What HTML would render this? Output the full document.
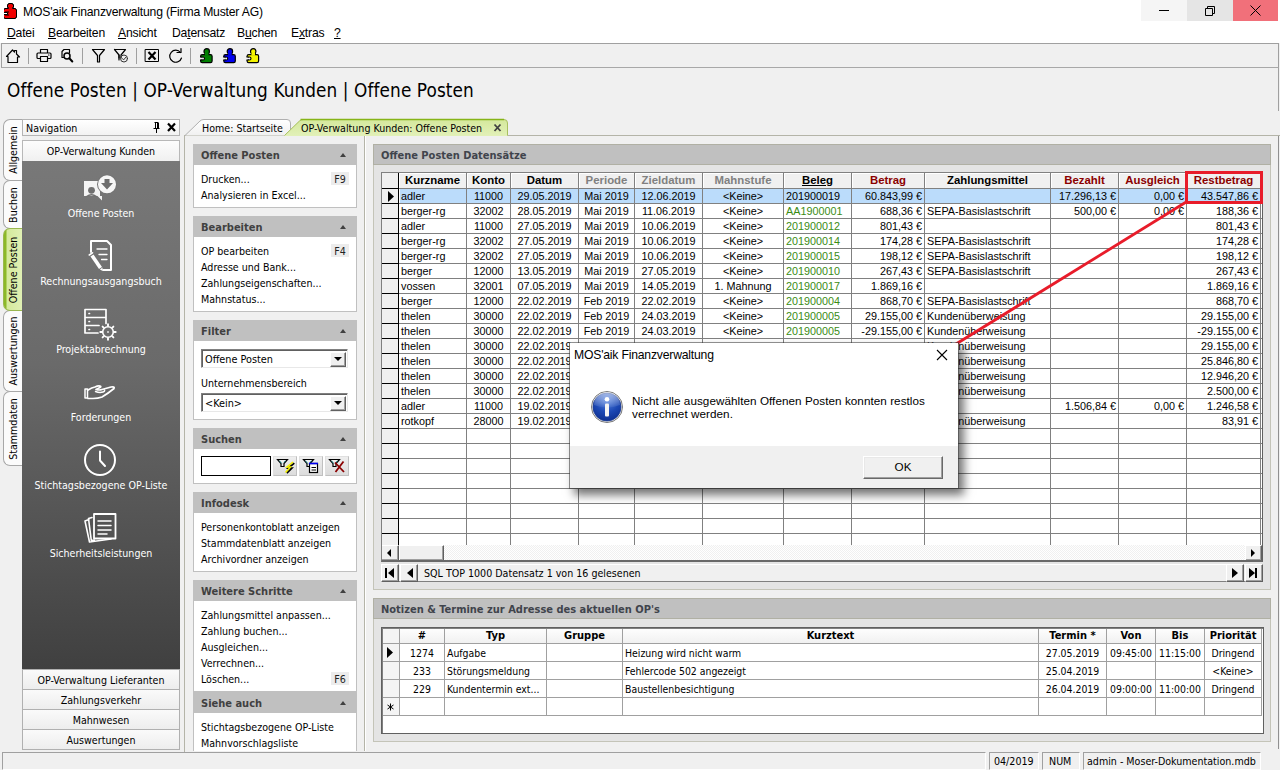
<!DOCTYPE html>
<html lang="de">
<head>
<meta charset="utf-8">
<title>MOS'aik Finanzverwaltung (Firma Muster AG)</title>
<style>
*{box-sizing:border-box;margin:0;padding:0}
html,body{width:1280px;height:770px;overflow:hidden;background:#f0f0f0}
body{position:relative;font-family:"Liberation Sans","DejaVu Sans",sans-serif;font-size:11px;color:#000}
.abs{position:absolute}
.ui{font-family:"DejaVu Sans Condensed","Liberation Sans",sans-serif}
/* title + menu */
#titlebar{left:0;top:0;width:1280px;height:22px;background:#fff}
#titletext{left:23px;top:3.500px;font-size:12.200px;line-height:16px;white-space:nowrap;letter-spacing:-.2px}
.wbtn{top:0;width:46px;height:21px}
#menubar{left:0;top:22px;width:1280px;height:21px;background:#fff}
.mi{top:25px;font-size:12.200px;line-height:16px;white-space:nowrap;letter-spacing:-.2px}
.mi u{text-decoration:underline;text-underline-offset:1px}
/* toolbar */
#toolbar{left:1px;top:43px;width:1278px;height:25px;background:#f0f0f0;border:1px solid #a0a0a0;border-bottom-color:#a8a8a8}
.tsep{top:48px;width:1px;height:16px;background:#a0a0a0}
#heading{left:7px;top:78.6px;font-size:18.8px;line-height:24px;white-space:nowrap;letter-spacing:.1px}

/* nav */
.vtab{left:3px;width:19px;background:#fbfbfb;border:1px solid #a8a8a8;border-right:none;border-radius:7px 0 0 7px}
.vtab span{position:absolute;left:50%;top:50%;transform:translate(-50%,-50%) rotate(-90deg);white-space:nowrap;font-size:10.6px;line-height:13px}
.vtab.act{background:linear-gradient(90deg,#8cb828 0,#8cb828 2px,#d4ea9c 3px,#e0f0b4 100%);border-color:#9ab850}
#navhead{left:22px;top:119px;width:158px;height:17px;background:linear-gradient(#fff,#f2f2f2);border:1px solid #b4b4b4}
#navbtn{left:22px;top:140px;width:158px;height:21px;background:linear-gradient(#fdfdfd,#f0f0f0);border:1px solid #b8b8b8;border-bottom:none;text-align:center;font-size:10.6px;line-height:20px}
#navdark{left:22px;top:161px;width:158px;height:508px;background:linear-gradient(#787878,#6a6a6a 40%,#404040)}
.nlab{left:22px;width:158px;text-align:center;color:#fff;font-size:10.6px;line-height:14px;white-space:nowrap}
.nbot{left:22px;width:158px;height:20px;background:linear-gradient(#fafafa,#ededed);border:1px solid #b0b0b0;border-bottom:none;text-align:center;font-size:10.6px;line-height:21px}

/* doc tabs + frame */
#frame{left:184px;top:135px;width:1096px;height:617px;border:1px solid #b4b4a8;border-right:none;border-bottom:none;background:#f0f0f0}
.dtxt{top:121px;font-size:10.6px;line-height:14px;white-space:nowrap}
/* task pane */
.tg{left:193px;width:164px;background:#fff;border:1px solid #c0c0c0}
.tgh{left:193px;width:164px;height:21px;background:#c0c0c0;color:#404040;font-weight:bold;font-size:11px;line-height:23px;padding-left:8px}
.tgh i{position:absolute;left:147px;top:9px;width:0;height:0;border-left:3px solid transparent;border-right:3px solid transparent;border-bottom:4px solid #404040}
.ti{left:201px;font-size:10.6px;line-height:14px;white-space:nowrap}
.fk{left:331px;width:18px;height:13px;background:#ececec;font-size:10.6px;line-height:14.5px;text-align:center;color:#222}
.combo{left:201px;width:147px;height:19px;background:#fff;border:1px solid #808080;border-right-color:#e8e8e8;border-bottom-color:#e8e8e8;box-shadow:inset 1px 1px 0 #606060;font-size:10.8px;line-height:19px;padding-left:3px}
.combo b{position:absolute;right:1px;top:2px;width:16px;height:15px;background:#f0f0f0;border:1px solid #fff;border-right-color:#606060;border-bottom-color:#606060;box-shadow:inset -1px -1px 0 #a0a0a0}
.combo b:after{content:"";position:absolute;left:3px;top:4px;border-left:4px solid transparent;border-right:4px solid transparent;border-top:4px solid #000}
.sbtn{top:456px;width:24px;height:20px;background:linear-gradient(#eee,#dcdcdc);border:1px solid #e0e0e0;border-right-color:#c0c0c0;border-bottom-color:#c0c0c0}

/* main panels */
.pnl{background:#e4e4e4;border:1px solid #c4c4b8}
.pnlh{height:21px;background:#c0c0c0;border:1px solid #b0b0a4;color:#40444c;font-weight:bold;font-size:11px;line-height:21px;padding-left:7px;white-space:nowrap}
.grid{background:#fff;overflow:hidden}
.gb{left:0;top:0;width:100%;height:100%;border:1px solid #808080;border-right-color:#606060;border-bottom-color:#606060}
.grid>*{position:absolute}
#g1{font-size:10.8px;line-height:15px}
#g1 .gh{top:1px;height:15px;font-weight:bold;font-size:11.4px;text-align:center;white-space:nowrap;box-shadow:inset 1px 1px 0 #fff}
.gh.g{color:#808080}.gh.r{color:#8b0000}.gh.u{text-decoration:underline}
.gr1{left:0;width:881px;height:15px}
.c{position:absolute;top:0;height:15px;white-space:nowrap;overflow:hidden}
.c.l{text-align:left;padding-left:2px}.c.r{text-align:right;padding-right:2px}.c.m{text-align:center}
.c.gr{color:#3a8c14}
.hl{left:0;width:881px;height:1px;background:#808080}
.vl{top:0;width:1px;height:373px}
.sb{background:#f0f0f0;border:1px solid #fff;border-right-color:#606060;border-bottom-color:#606060;box-shadow:inset -1px -1px 0 #a0a0a0}

#g2{font-size:10.4px;line-height:17px}
#g2 .gh{top:1px;height:15px;font-weight:bold;font-size:11px;line-height:15px;text-align:center;white-space:nowrap}
.gr2{left:0;width:881px;height:18px}
.gr2 .c{height:18px;line-height:18px}
.gr2 .c.l{padding-left:2px}
/* status */
.st{top:752px;height:18px;border:1px solid #a0a0a0;border-right-color:#fff;border-bottom-color:#fff;font-size:10.6px;line-height:16px;white-space:nowrap;padding-left:4px}

/* dialog */
#dlg{left:570px;top:343px;width:388px;height:145px;background:#fff;box-shadow:0 0 0 1px rgba(60,60,60,.55),5px 6px 9px 1px rgba(0,0,0,.55)}
#dlgfoot{left:0;top:103px;width:388px;height:42px;background:#f0f0f0}
#dlgt{left:4px;top:4px;font-size:12.200px;line-height:16px;white-space:nowrap;letter-spacing:-.2px}
#dlgm{left:62px;top:51px;font-size:11.7px;line-height:13px;white-space:nowrap;letter-spacing:.05px}
#ok{left:293px;top:113px;width:80px;height:23px;background:#f0f0f0;border:1px solid #fff;border-right-color:#696969;border-bottom-color:#696969;box-shadow:inset -1px -1px 0 #a0a0a0,inset 1px 1px 0 #e8e8e8;text-align:center;font-size:11.7px;line-height:20px}
</style>
</head>
<body>
<!-- ===== title bar ===== -->
<div id="titlebar" class="abs"></div>
<svg class="abs" style="left:4px;top:3px" width="13" height="16" viewBox="0 0 13 16"><path d="M4.5 0.5h4v1h1v3h-1v1h3v1h1v8h-1v1h-11v-1h-1v-3h4v-2h-4v-3h1v-1h4v-1h-1v-3h1z" fill="#f00000" stroke="#000" stroke-width="1"/><path d="M1 9h4M1 12h4" stroke="#000" stroke-width="1" fill="none"/></svg>
<div id="titletext" class="abs">MOS'aik Finanzverwaltung (Firma Muster AG)</div>
<div class="abs wbtn" style="left:1141px;background:#f5f5f5"></div>
<div class="abs wbtn" style="left:1187px;background:#e5e5e5"></div>
<div class="abs wbtn" style="left:1233px;width:45px;background:#f1707a"></div>
<svg class="abs" style="left:1141px;top:0" width="138" height="21" viewBox="0 0 138 21"><path d="M18 10.5h10" stroke="#000" stroke-width="1" fill="none"/><path d="M64.5 8.500h7v7h-7zM66.500 8.500v-2h7v7h-2" stroke="#000" stroke-width="1" fill="none"/><path d="M109.500 5.500l10 10M119.500 5.500l-10 10" stroke="#000" stroke-width="1" fill="none"/></svg>
<!-- ===== menu bar ===== -->
<div id="menubar" class="abs"></div>
<div class="abs mi" style="left:7px"><u>D</u>atei</div>
<div class="abs mi" style="left:48px"><u>B</u>earbeiten</div>
<div class="abs mi" style="left:118px"><u>A</u>nsicht</div>
<div class="abs mi" style="left:172px">Da<u>t</u>ensatz</div>
<div class="abs mi" style="left:237px">B<u>u</u>chen</div>
<div class="abs mi" style="left:291px">E<u>x</u>tras</div>
<div class="abs mi" style="left:334px"><u>?</u></div>
<!-- ===== toolbar ===== -->
<div id="toolbar" class="abs"></div>
<div class="abs tsep" style="left:28px"></div>
<div class="abs tsep" style="left:82px"></div>
<div class="abs tsep" style="left:136px"></div>
<div class="abs tsep" style="left:190px"></div>
<svg class="abs" style="left:0;top:43px" width="270" height="25" viewBox="0 43 270 25" fill="none" stroke="#000" stroke-width="1.2" stroke-linejoin="round" stroke-linecap="round">
<path d="M6.5 56.500l6-6.500l2 2v-1.500h2v3.500l3 3h-2v5.500h-9.500v-6z"/>
<path d="M40.500 53v-3.500h7v3.500M40.500 58.500h-2.500q-1 0-1-1v-3.500q0-1 1-1h12q1 0 1 1v3.500q0 1-1 1h-2.500M40.500 56.500h7v5h-7z"/><path d="M48.500 55h0.500"/>
<path d="M63.500 57.500h-1.500v-6l2-2h5.500v3"/><circle cx="67" cy="56" r="3" stroke-width="1.500"/><path d="M69.300 58.300l3 3.200" stroke-width="2"/>
<path d="M92.500 49.500h12l-5 6v6.500h-2v-6.500z"/>
<path d="M114.500 49.500h11l-4.500 5.500v3M119 58v-3z"/><path d="M114.500 49.500l4.500 5.500v5"/><circle cx="124" cy="58.500" r="3.500" stroke="#333" stroke-width="1"/><path d="M122.300 58.500l1.300 1.400l2.200-2.600" stroke="#333" stroke-width="1"/>
<rect x="145.500" y="49.500" width="13" height="12" stroke-width="1"/><path d="M148.500 52l7 7.500M155.500 52l-7 7.500" stroke-width="2.200" stroke-linecap="butt"/>
<path d="M180.500 52.500a6 6 0 1 0 1 5.500"/><path d="M177 52.500h4v-4"/>
</svg>
<svg class="abs" style="left:199px;top:48px" width="64" height="16" viewBox="0 0 64 16"><g transform="translate(0,0)"><rect x="1.6" y="6.600" width="11.500" height="8" rx="1.600" fill="#008000" stroke="#000" stroke-width="1.200"/><circle cx="7.700" cy="3.400" r="2.700" fill="#008000" stroke="#000" stroke-width="1.200"/><rect x="5.900" y="4.500" width="3.600" height="3.200" fill="#008000"/><rect x="0.500" y="9.200" width="3.500" height="2.600" fill="#f0f0f0"/><circle cx="4" cy="10.500" r="1.500" fill="#f4f4f4" stroke="#000" stroke-width="1.100"/><rect x="0.500" y="9.700" width="3" height="1.600" fill="#f0f0f0"/><path d="M1 9h2.500M1 12h2.500" stroke="#000" stroke-width="1.100" fill="none"/></g><g transform="translate(23.2,0)"><rect x="1.6" y="6.600" width="11.500" height="8" rx="1.600" fill="#0000f0" stroke="#000" stroke-width="1.200"/><circle cx="7.700" cy="3.400" r="2.700" fill="#0000f0" stroke="#000" stroke-width="1.200"/><rect x="5.900" y="4.500" width="3.600" height="3.200" fill="#0000f0"/><rect x="0.500" y="9.200" width="3.500" height="2.600" fill="#f0f0f0"/><circle cx="4" cy="10.500" r="1.500" fill="#f4f4f4" stroke="#000" stroke-width="1.100"/><rect x="0.500" y="9.700" width="3" height="1.600" fill="#f0f0f0"/><path d="M1 9h2.500M1 12h2.500" stroke="#000" stroke-width="1.100" fill="none"/></g><g transform="translate(46.5,0)"><rect x="1.6" y="6.600" width="11.500" height="8" rx="1.600" fill="#f4f400" stroke="#000" stroke-width="1.200"/><circle cx="7.700" cy="3.400" r="2.700" fill="#f4f400" stroke="#000" stroke-width="1.200"/><rect x="5.900" y="4.500" width="3.600" height="3.200" fill="#f4f400"/><rect x="0.500" y="9.200" width="3.500" height="2.600" fill="#f0f0f0"/><circle cx="4" cy="10.500" r="1.500" fill="#f4f4f4" stroke="#000" stroke-width="1.100"/><rect x="0.500" y="9.700" width="3" height="1.600" fill="#f0f0f0"/><path d="M1 9h2.500M1 12h2.500" stroke="#000" stroke-width="1.100" fill="none"/></g></svg>
<!--TOOLBARICONS-->
<div id="heading" class="abs ui">Offene Posten | OP-Verwaltung Kunden | Offene Posten</div>
<div class="abs" style="left:1278px;top:68px;width:1px;height:43px;background:#a0a0a0"></div>
<!-- ===== navigation pane ===== -->
<div class="abs vtab ui" style="top:119px;height:62px"><span>Allgemein</span></div>
<div class="abs vtab ui" style="top:180px;height:49px"><span>Buchen</span></div>
<div class="abs vtab ui" style="top:310px;height:82px"><span>Auswertungen</span></div>
<div class="abs vtab ui" style="top:391px;height:75px"><span>Stammdaten</span></div>
<div class="abs vtab act ui" style="top:228px;height:83px"><span>Offene Posten</span></div>
<div id="navhead" class="abs"></div>
<div class="abs ui" style="left:26px;top:122px;font-size:10.6px;line-height:13px">Navigation</div>
<svg class="abs" style="left:152px;top:122px" width="26" height="11" viewBox="0 0 26 11"><path d="M2.500 0.500h4M3.500 1v5M5.500 1v5M6.500 1v5M1.500 6.500h6M4.500 7v4" stroke="#000" stroke-width="1" fill="none"/><path d="M16 1.500l7 7.500M23 1.500l-7 7.500" stroke="#000" stroke-width="2.200" fill="none"/></svg>
<div id="navbtn" class="abs ui">OP-Verwaltung Kunden</div>
<div id="navdark" class="abs"></div>
<svg class="abs" style="left:70px;top:165px" width="60" height="385" viewBox="70 165 60 385" fill="none" stroke="#fff" stroke-width="2" stroke-linejoin="round" stroke-linecap="round">
<!-- offene posten -->
<path d="M84 181h16v15h2v4.500l-4.500-4.500h-13.500z" fill="#f4f4f4" stroke="none"/>
<circle cx="91.500" cy="190.300" r="3.400" fill="#707070" stroke="none"/><path d="M86.500 196.500q5-3.500 10 0" stroke="#707070" stroke-width="1.300"/>
<circle cx="107" cy="184.300" r="10" fill="#747474" stroke="none"/><circle cx="107" cy="184.300" r="9" fill="#f6f6f6" stroke="none"/>
<path d="M104.500 179h5v4h3.500l-6 6.500l-6-6.500h3.500z" fill="#6c6c6c" stroke="none"/>
<!-- rechnungsausgangsbuch -->
<path d="M91 252v-11h16l4 4v25h-8"/><path d="M97 249h10M99 254.500h8M101.500 259.500h5.500" stroke-width="1.300"/>
<path d="M90.500 256.500l3-2l8.500 12.500l-3 2z" fill="#fff" stroke="none"/><path d="M99.800 269.500l2.500 1.300l0.300-3.200z" fill="#fff" stroke="none"/><path d="M89.300 255l3.200-2.200" stroke-width="1.600"/>
<!-- projektabrechnung -->
<path d="M85 309.500h21v14M85 309.500v23.500h13M85 317.500h21M85 325.500h14" stroke-width="1.700"/><path d="M89 313.500h0.500M89 321.500h0.500M89 329.500h0.500" stroke-width="1.700"/>
<circle cx="108" cy="332" r="5.300" stroke-width="1.600"/><path d="M108 324.300v1.500M108 338.200v1.500M100.300 332h1.500M114.200 332h1.500M102.600 326.600l1 1M112.400 336.400l1 1M102.600 337.400l1-1M112.400 327.600l1-1" stroke-width="1.900"/><path d="M107.700 332h0.600" stroke-width="1.400"/>
<!-- forderungen -->
<path d="M85 389h2.500v9h-2.500z" stroke-width="1.500"/><path d="M88 390q4-2.500 7-3q3-1.500 5-1q2 0.500-1 2l-3 1.500q3 1 6 0l9-2.500q4-0.500 3 1.500q-6 5-12 8.500q-4 1.500-9 1.500h-5" stroke-width="1.700"/><path d="M95.500 391.500q4 1.500 7.500 0.500q2-0.600 1.500-2" stroke-width="1.500"/>
<!-- stichtag -->
<circle cx="100" cy="460" r="15" stroke-width="2"/><path d="M100 451.500v9l5 5.500" stroke-width="2"/>
<!-- sicherheitsleistungen -->
<path d="M94 514h21.500v24.500h-21.500z" stroke-width="1.800"/><path d="M98 521h13M98 525.500h13M98 530h13M98 534h9" stroke-width="1.500"/>
<path d="M92 517.500l-3.500 1l2.800 22l3-0.400M89 519.500l-4 1.500l4.500 21l21.500-3" stroke-width="1.600"/>
</svg>
<div class="abs nlab ui" style="top:206px">Offene Posten</div>
<div class="abs nlab ui" style="top:274px">Rechnungsausgangsbuch</div>
<div class="abs nlab ui" style="top:342px">Projektabrechnung</div>
<div class="abs nlab ui" style="top:410px">Forderungen</div>
<div class="abs nlab ui" style="top:478px">Stichtagsbezogene OP-Liste</div>
<div class="abs nlab ui" style="top:546px">Sicherheitsleistungen</div>
<div class="abs nbot ui" style="top:669px">OP-Verwaltung Lieferanten</div>
<div class="abs nbot ui" style="top:689px">Zahlungsverkehr</div>
<div class="abs nbot ui" style="top:709px">Mahnwesen</div>
<div class="abs nbot ui" style="top:729px;height:21px;border-bottom:1px solid #b0b0b0">Auswertungen</div>

<!-- ===== document tabs / frame ===== -->
<div id="frame" class="abs"></div>
<svg class="abs" style="left:184px;top:118px" width="330" height="19" viewBox="184 118 330 19">
<defs><linearGradient id="gt" x1="0" y1="0" x2="0" y2="1"><stop offset="0" stop-color="#fff"/><stop offset="1" stop-color="#f0f0f0"/></linearGradient>
<linearGradient id="gg" x1="0" y1="0" x2="0" y2="1"><stop offset="0" stop-color="#d4e89c"/><stop offset="1" stop-color="#e2f0b8"/></linearGradient></defs>
<path d="M185 135.500l15-14.500q1.500-1.500 4-1.500h83q3.500 0 3.500 3.500v12.500z" fill="url(#gt)"/><path d="M185 135.500l15-14.500q1.500-1.500 4-1.500h83q3.500 0 3.500 3.500v12.500" fill="none" stroke="#b0b0b0"/>
<path d="M284 136l15-15q1.500-1.500 4-1.500h201q3.500 0 3.500 3.500v13z" fill="url(#gg)"/><path d="M284.500 135.500l15-14.500q1.500-1.500 4-1.500h200.500q3.500 0 3.500 3.500v12.500" fill="none" stroke="#a8c060"/><path d="M300.500 119.500h203.500" stroke="#86b418" stroke-width="1.600" fill="none"/>
<path d="M494.500 124.500l6 6.500M500.500 124.500l-6 6.500" stroke="#404040" stroke-width="1.800" fill="none"/>
</svg>
<div class="abs dtxt ui" style="left:202px">Home: Startseite</div>
<div class="abs dtxt ui" style="left:301px">OP-Verwaltung Kunden: Offene Posten</div>
<div class="abs" style="left:364px;top:136px;width:1px;height:615px;background:#b4b4a8"></div>
<div class="abs" style="left:365px;top:136px;width:1px;height:615px;background:#fff"></div>

<!-- ===== task pane ===== -->
<div class="abs tg" style="top:144px;height:64px"></div><div class="abs tgh ui" style="top:144px">Offene Posten<i></i></div>
<div class="abs ti ui" style="top:172px">Drucken...</div><div class="abs fk ui" style="top:172px">F9</div>
<div class="abs ti ui" style="top:188px">Analysieren in Excel...</div>
<div class="abs tg" style="top:216px;height:96px"></div><div class="abs tgh ui" style="top:216px">Bearbeiten<i></i></div>
<div class="abs ti ui" style="top:244px">OP bearbeiten</div><div class="abs fk ui" style="top:244px">F4</div>
<div class="abs ti ui" style="top:260px">Adresse und Bank...</div>
<div class="abs ti ui" style="top:276px">Zahlungseigenschaften...</div>
<div class="abs ti ui" style="top:292px">Mahnstatus...</div>
<div class="abs tg" style="top:320px;height:100px"></div><div class="abs tgh ui" style="top:320px">Filter<i></i></div>
<div class="abs combo ui" style="top:349px">Offene Posten<b></b></div>
<div class="abs ti ui" style="top:376px">Unternehmensbereich</div>
<div class="abs combo ui" style="top:393px">&lt;Kein&gt;<b></b></div>
<div class="abs tg" style="top:428px;height:56px"></div><div class="abs tgh ui" style="top:428px">Suchen<i></i></div>
<div class="abs" style="left:201px;top:456px;width:70px;height:20px;background:#fff;border:1px solid #000"></div>
<div class="abs sbtn" style="left:273px"></div><div class="abs sbtn" style="left:299px"></div><div class="abs sbtn" style="left:325px"></div>
<svg class="abs" style="left:273px;top:456px" width="76" height="20" viewBox="273 456 76 20" fill="none">
<g id="fn"><path d="M277.500 459.500h10l-3.500 4v3h-3v-3z" fill="#f0f0f0" stroke="#000" stroke-width="1.200"/><path d="M279.500 460.800l2.300 2.700M285.300 460.800l-1.300 1.600" stroke="#20a0a0" stroke-width="0.900"/></g>
<path d="M293.500 462.500l-6 5h3.500l-5 5" stroke="#000" stroke-width="1.800" transform="translate(0.800,0.600)"/><path d="M293 462l-6 5h3.500l-5 5.500" stroke="#f4f000" stroke-width="1.600"/>
<use href="#fn" x="26"/>
<rect x="309.500" y="463.500" width="8" height="9" fill="#fff" stroke="#000" stroke-width="1.200"/><path d="M309 463.500h9" stroke="#0000f0" stroke-width="1.600"/><path d="M311.500 467.500h4.500M311.500 470h4.500" stroke="#000" stroke-width="1"/>
<use href="#fn" x="52"/>
<path d="M335 462.500l9 9.500M343.500 461.500l-8 10.500" stroke="#8b0000" stroke-width="1.800"/>
</svg>
<div class="abs tg" style="top:492px;height:80px"></div><div class="abs tgh ui" style="top:492px">Infodesk<i></i></div>
<div class="abs ti ui" style="top:520px">Personenkontoblatt anzeigen</div>
<div class="abs ti ui" style="top:536px">Stammdatenblatt anzeigen</div>
<div class="abs ti ui" style="top:552px">Archivordner anzeigen</div>
<div class="abs tg" style="top:580px;height:112px"></div><div class="abs tgh ui" style="top:580px">Weitere Schritte<i></i></div>
<div class="abs ti ui" style="top:608px">Zahlungsmittel anpassen...</div>
<div class="abs ti ui" style="top:624px">Zahlung buchen...</div>
<div class="abs ti ui" style="top:640px">Ausgleichen...</div>
<div class="abs ti ui" style="top:656px">Verrechnen...</div>
<div class="abs ti ui" style="top:672px">Löschen...</div><div class="abs fk ui" style="top:672px">F6</div>
<div class="abs tg" style="top:692px;height:59px;border-bottom:none"></div><div class="abs tgh ui" style="top:692px">Siehe auch<i></i></div>
<div class="abs ti ui" style="top:720px">Stichtagsbezogene OP-Liste</div>
<div class="abs ti ui" style="top:736px">Mahnvorschlagsliste</div>

<!-- ===== main: panel 1 ===== -->
<div class="abs pnl" style="left:373px;top:144px;width:898px;height:446px"></div>
<div class="abs pnlh ui" style="left:373px;top:144px;width:898px">Offene Posten Datensätze</div>
<div id="g1" class="abs grid" style="left:381px;top:172px;width:882px;height:390px">
<div class="abs" style="left:0;top:0;width:881px;height:17px;background:#f0f0f0"></div>
<div class="abs" style="left:0;top:0;width:18px;height:374px;background:#f0f0f0"></div>
<div class="abs" style="left:19px;top:17px;width:861px;height:14px;background:#bbdcfb"></div>
<div class="abs gh k" style="left:18px;width:67px">Kurzname</div>
<div class="abs gh k" style="left:86px;width:43px">Konto</div>
<div class="abs gh k" style="left:130px;width:67px">Datum</div>
<div class="abs gh g" style="left:198px;width:55px">Periode</div>
<div class="abs gh g" style="left:254px;width:67px">Zieldatum</div>
<div class="abs gh g" style="left:322px;width:80px">Mahnstufe</div>
<div class="abs gh u" style="left:403px;width:67px">Beleg</div>
<div class="abs gh r" style="left:471px;width:72px">Betrag</div>
<div class="abs gh k" style="left:544px;width:125px">Zahlungsmittel</div>
<div class="abs gh r" style="left:670px;width:67px">Bezahlt</div>
<div class="abs gh r" style="left:738px;width:67px">Ausgleich</div>
<div class="abs gh r" style="left:806px;width:73px">Restbetrag</div>
<div class="abs gr1" style="top:17px"><span class="c l" style="left:18px;width:67px">adler</span><span class="c m" style="left:86px;width:43px">11000</span><span class="c m" style="left:130px;width:67px">29.05.2019</span><span class="c m" style="left:198px;width:55px">Mai 2019</span><span class="c m" style="left:254px;width:67px">12.06.2019</span><span class="c m" style="left:322px;width:80px">&lt;Keine&gt;</span><span class="c l" style="left:403px;width:67px">201900019</span><span class="c r" style="left:471px;width:72px">60.843,99 €</span><span class="c r" style="left:670px;width:67px">17.296,13 €</span><span class="c r" style="left:738px;width:67px">0,00 €</span><span class="c r" style="left:806px;width:73px">43.547,86 €</span></div>
<div class="abs gr1" style="top:32px"><span class="c l" style="left:18px;width:67px">berger-rg</span><span class="c m" style="left:86px;width:43px">32002</span><span class="c m" style="left:130px;width:67px">28.05.2019</span><span class="c m" style="left:198px;width:55px">Mai 2019</span><span class="c m" style="left:254px;width:67px">11.06.2019</span><span class="c m" style="left:322px;width:80px">&lt;Keine&gt;</span><span class="c l gr" style="left:403px;width:67px">AA1900001</span><span class="c r" style="left:471px;width:72px">688,36 €</span><span class="c l" style="left:544px;width:125px">SEPA-Basislastschrift</span><span class="c r" style="left:670px;width:67px">500,00 €</span><span class="c r" style="left:738px;width:67px">0,00 €</span><span class="c r" style="left:806px;width:73px">188,36 €</span></div>
<div class="abs gr1" style="top:47px"><span class="c l" style="left:18px;width:67px">adler</span><span class="c m" style="left:86px;width:43px">11000</span><span class="c m" style="left:130px;width:67px">27.05.2019</span><span class="c m" style="left:198px;width:55px">Mai 2019</span><span class="c m" style="left:254px;width:67px">10.06.2019</span><span class="c m" style="left:322px;width:80px">&lt;Keine&gt;</span><span class="c l gr" style="left:403px;width:67px">201900012</span><span class="c r" style="left:471px;width:72px">801,43 €</span><span class="c r" style="left:806px;width:73px">801,43 €</span></div>
<div class="abs gr1" style="top:62px"><span class="c l" style="left:18px;width:67px">berger-rg</span><span class="c m" style="left:86px;width:43px">32002</span><span class="c m" style="left:130px;width:67px">27.05.2019</span><span class="c m" style="left:198px;width:55px">Mai 2019</span><span class="c m" style="left:254px;width:67px">10.06.2019</span><span class="c m" style="left:322px;width:80px">&lt;Keine&gt;</span><span class="c l gr" style="left:403px;width:67px">201900014</span><span class="c r" style="left:471px;width:72px">174,28 €</span><span class="c l" style="left:544px;width:125px">SEPA-Basislastschrift</span><span class="c r" style="left:806px;width:73px">174,28 €</span></div>
<div class="abs gr1" style="top:77px"><span class="c l" style="left:18px;width:67px">berger-rg</span><span class="c m" style="left:86px;width:43px">32002</span><span class="c m" style="left:130px;width:67px">27.05.2019</span><span class="c m" style="left:198px;width:55px">Mai 2019</span><span class="c m" style="left:254px;width:67px">10.06.2019</span><span class="c m" style="left:322px;width:80px">&lt;Keine&gt;</span><span class="c l gr" style="left:403px;width:67px">201900015</span><span class="c r" style="left:471px;width:72px">198,12 €</span><span class="c l" style="left:544px;width:125px">SEPA-Basislastschrift</span><span class="c r" style="left:806px;width:73px">198,12 €</span></div>
<div class="abs gr1" style="top:92px"><span class="c l" style="left:18px;width:67px">berger</span><span class="c m" style="left:86px;width:43px">12000</span><span class="c m" style="left:130px;width:67px">13.05.2019</span><span class="c m" style="left:198px;width:55px">Mai 2019</span><span class="c m" style="left:254px;width:67px">27.05.2019</span><span class="c m" style="left:322px;width:80px">&lt;Keine&gt;</span><span class="c l gr" style="left:403px;width:67px">201900010</span><span class="c r" style="left:471px;width:72px">267,43 €</span><span class="c l" style="left:544px;width:125px">SEPA-Basislastschrift</span><span class="c r" style="left:806px;width:73px">267,43 €</span></div>
<div class="abs gr1" style="top:107px"><span class="c l" style="left:18px;width:67px">vossen</span><span class="c m" style="left:86px;width:43px">32001</span><span class="c m" style="left:130px;width:67px">07.05.2019</span><span class="c m" style="left:198px;width:55px">Mai 2019</span><span class="c m" style="left:254px;width:67px">14.05.2019</span><span class="c m" style="left:322px;width:80px">1. Mahnung</span><span class="c l gr" style="left:403px;width:67px">201900017</span><span class="c r" style="left:471px;width:72px">1.869,16 €</span><span class="c r" style="left:806px;width:73px">1.869,16 €</span></div>
<div class="abs gr1" style="top:122px"><span class="c l" style="left:18px;width:67px">berger</span><span class="c m" style="left:86px;width:43px">12000</span><span class="c m" style="left:130px;width:67px">22.02.2019</span><span class="c m" style="left:198px;width:55px">Feb 2019</span><span class="c m" style="left:254px;width:67px">22.02.2019</span><span class="c m" style="left:322px;width:80px">&lt;Keine&gt;</span><span class="c l gr" style="left:403px;width:67px">201900004</span><span class="c r" style="left:471px;width:72px">868,70 €</span><span class="c l" style="left:544px;width:125px">SEPA-Basislastschrift</span><span class="c r" style="left:806px;width:73px">868,70 €</span></div>
<div class="abs gr1" style="top:137px"><span class="c l" style="left:18px;width:67px">thelen</span><span class="c m" style="left:86px;width:43px">30000</span><span class="c m" style="left:130px;width:67px">22.02.2019</span><span class="c m" style="left:198px;width:55px">Feb 2019</span><span class="c m" style="left:254px;width:67px">24.03.2019</span><span class="c m" style="left:322px;width:80px">&lt;Keine&gt;</span><span class="c l gr" style="left:403px;width:67px">201900005</span><span class="c r" style="left:471px;width:72px">29.155,00 €</span><span class="c l" style="left:544px;width:125px">Kundenüberweisung</span><span class="c r" style="left:806px;width:73px">29.155,00 €</span></div>
<div class="abs gr1" style="top:152px"><span class="c l" style="left:18px;width:67px">thelen</span><span class="c m" style="left:86px;width:43px">30000</span><span class="c m" style="left:130px;width:67px">22.02.2019</span><span class="c m" style="left:198px;width:55px">Feb 2019</span><span class="c m" style="left:254px;width:67px">24.03.2019</span><span class="c m" style="left:322px;width:80px">&lt;Keine&gt;</span><span class="c l gr" style="left:403px;width:67px">201900005</span><span class="c r" style="left:471px;width:72px">-29.155,00 €</span><span class="c l" style="left:544px;width:125px">Kundenüberweisung</span><span class="c r" style="left:806px;width:73px">-29.155,00 €</span></div>
<div class="abs gr1" style="top:167px"><span class="c l" style="left:18px;width:67px">thelen</span><span class="c m" style="left:86px;width:43px">30000</span><span class="c m" style="left:130px;width:67px">22.02.2019</span><span class="c l" style="left:544px;width:125px">Kundenüberweisung</span><span class="c r" style="left:806px;width:73px">29.155,00 €</span></div>
<div class="abs gr1" style="top:182px"><span class="c l" style="left:18px;width:67px">thelen</span><span class="c m" style="left:86px;width:43px">30000</span><span class="c m" style="left:130px;width:67px">22.02.2019</span><span class="c l" style="left:544px;width:125px">Kundenüberweisung</span><span class="c r" style="left:806px;width:73px">25.846,80 €</span></div>
<div class="abs gr1" style="top:197px"><span class="c l" style="left:18px;width:67px">thelen</span><span class="c m" style="left:86px;width:43px">30000</span><span class="c m" style="left:130px;width:67px">22.02.2019</span><span class="c l" style="left:544px;width:125px">Kundenüberweisung</span><span class="c r" style="left:806px;width:73px">12.946,20 €</span></div>
<div class="abs gr1" style="top:212px"><span class="c l" style="left:18px;width:67px">thelen</span><span class="c m" style="left:86px;width:43px">30000</span><span class="c m" style="left:130px;width:67px">22.02.2019</span><span class="c l" style="left:544px;width:125px">Kundenüberweisung</span><span class="c r" style="left:806px;width:73px">2.500,00 €</span></div>
<div class="abs gr1" style="top:227px"><span class="c l" style="left:18px;width:67px">adler</span><span class="c m" style="left:86px;width:43px">11000</span><span class="c m" style="left:130px;width:67px">19.02.2019</span><span class="c r" style="left:670px;width:67px">1.506,84 €</span><span class="c r" style="left:738px;width:67px">0,00 €</span><span class="c r" style="left:806px;width:73px">1.246,58 €</span></div>
<div class="abs gr1" style="top:242px"><span class="c l" style="left:18px;width:67px">rotkopf</span><span class="c m" style="left:86px;width:43px">28000</span><span class="c m" style="left:130px;width:67px">19.02.2019</span><span class="c l" style="left:544px;width:125px">Kundenüberweisung</span><span class="c r" style="left:806px;width:73px">83,91 €</span></div>
<i class="hl" style="top:16px"></i>
<i class="hl" style="top:31px"></i>
<i class="hl" style="top:46px"></i>
<i class="hl" style="top:61px"></i>
<i class="hl" style="top:76px"></i>
<i class="hl" style="top:91px"></i>
<i class="hl" style="top:106px"></i>
<i class="hl" style="top:121px"></i>
<i class="hl" style="top:136px"></i>
<i class="hl" style="top:151px"></i>
<i class="hl" style="top:166px"></i>
<i class="hl" style="top:181px"></i>
<i class="hl" style="top:196px"></i>
<i class="hl" style="top:211px"></i>
<i class="hl" style="top:226px"></i>
<i class="hl" style="top:241px"></i>
<i class="hl" style="top:256px"></i>
<i class="hl" style="top:271px"></i>
<i class="hl" style="top:286px"></i>
<i class="hl" style="top:301px"></i>
<i class="hl" style="top:316px"></i>
<i class="hl" style="top:331px"></i>
<i class="hl" style="top:346px"></i>
<i class="hl" style="top:361px"></i>
<i class="vl" style="left:17px;background:#000"></i>
<i class="vl" style="left:85px;background:#808080"></i>
<i class="vl" style="left:129px;background:#808080"></i>
<i class="vl" style="left:197px;background:#808080"></i>
<i class="vl" style="left:253px;background:#808080"></i>
<i class="vl" style="left:321px;background:#808080"></i>
<i class="vl" style="left:402px;background:#808080"></i>
<i class="vl" style="left:470px;background:#808080"></i>
<i class="vl" style="left:543px;background:#808080"></i>
<i class="vl" style="left:669px;background:#808080"></i>
<i class="vl" style="left:737px;background:#808080"></i>
<i class="vl" style="left:805px;background:#808080"></i>
<i class="vl" style="left:879px;background:#808080"></i>
<i class="hl" style="top:16px;width:18px;background:#000"></i>
<i class="hl" style="top:31px;width:18px;background:#000"></i>
<i class="hl" style="top:46px;width:18px;background:#000"></i>
<i class="hl" style="top:61px;width:18px;background:#000"></i>
<i class="hl" style="top:76px;width:18px;background:#000"></i>
<i class="hl" style="top:91px;width:18px;background:#000"></i>
<i class="hl" style="top:106px;width:18px;background:#000"></i>
<i class="hl" style="top:121px;width:18px;background:#000"></i>
<i class="hl" style="top:136px;width:18px;background:#000"></i>
<i class="hl" style="top:151px;width:18px;background:#000"></i>
<i class="hl" style="top:166px;width:18px;background:#000"></i>
<i class="hl" style="top:181px;width:18px;background:#000"></i>
<i class="hl" style="top:196px;width:18px;background:#000"></i>
<i class="hl" style="top:211px;width:18px;background:#000"></i>
<i class="hl" style="top:226px;width:18px;background:#000"></i>
<i class="hl" style="top:241px;width:18px;background:#000"></i>
<i class="hl" style="top:256px;width:18px;background:#000"></i>
<i class="hl" style="top:271px;width:18px;background:#000"></i>
<i class="hl" style="top:286px;width:18px;background:#000"></i>
<i class="hl" style="top:301px;width:18px;background:#000"></i>
<i class="hl" style="top:316px;width:18px;background:#000"></i>
<i class="hl" style="top:331px;width:18px;background:#000"></i>
<i class="hl" style="top:346px;width:18px;background:#000"></i>
<i class="hl" style="top:361px;width:18px;background:#000"></i>
<svg class="abs" style="left:7px;top:19px" width="6" height="11" viewBox="0 0 6 11"><path d="M0 0l6 5.500l-6 5.500z" fill="#000"/></svg>
<div class="abs" style="left:0;top:373px;width:881px;height:16px;background:#f8f8f8;background-image:repeating-conic-gradient(#fff 0 25%,#f0f0f0 0 50%);background-size:2px 2px"></div>
<div class="abs sb" style="left:0;top:373px;width:18px;height:16px"></div><div class="abs sb" style="left:18px;top:373px;width:45px;height:16px"></div><div class="abs sb" style="left:864px;top:373px;width:17px;height:16px"></div>
<svg class="abs" style="left:0;top:373px" width="881" height="16" viewBox="0 0 881 16"><path d="M10 4v8l-4-4z" fill="#000"/><path d="M870 4v8l4-4z" fill="#000"/></svg>
<div class="abs gb" style="border-bottom:2px solid #696969"></div>
</div>
<div class="abs" style="left:381px;top:564px;width:882px;height:18px;background:#f0f0f0;border:1px solid #fff;border-right-color:#808080;border-bottom-color:#808080"></div>
<div class="abs sb" style="left:381px;top:564px;width:18px;height:18px"></div>
<div class="abs sb" style="left:400px;top:564px;width:18px;height:18px"></div>
<div class="abs sb" style="left:1226px;top:564px;width:18px;height:18px"></div>
<div class="abs sb" style="left:1245px;top:564px;width:18px;height:18px"></div>
<svg class="abs" style="left:381px;top:564px" width="882" height="18" viewBox="0 0 882 18" fill="#000"><path d="M4 4h2v10h-2zM13 4v10l-6-5z"/><path d="M32 4v10l-6-5z"/><path d="M851 4v10l6-5z"/><path d="M868 4v10l6-5zM874 4h2v10h-2z"/></svg>
<div class="abs ui" style="left:424px;top:566px;font-size:10.6px;line-height:14px;white-space:nowrap">SQL TOP 1000 Datensatz 1 von 16 gelesenen</div>
<!-- ===== main: panel 2 ===== -->
<div class="abs pnl" style="left:373px;top:598px;width:898px;height:144px"></div>
<div class="abs pnlh ui" style="left:373px;top:598px;width:898px">Notizen &amp; Termine zur Adresse des aktuellen OP's</div>
<div id="g2" class="abs grid ui" style="left:381px;top:627px;width:883px;height:107px">
<div class="abs" style="left:0;top:0;width:881px;height:17px;background:linear-gradient(#fff,#f0f0f0)"></div>
<div class="abs" style="left:0;top:0;width:18px;height:89px;background:#f4f4f4"></div>
<div class="abs gh" style="left:19px;width:44px">#</div>
<div class="abs gh" style="left:64px;width:101px">Typ</div>
<div class="abs gh" style="left:166px;width:75px">Gruppe</div>
<div class="abs gh" style="left:242px;width:415px">Kurztext</div>
<div class="abs gh" style="left:658px;width:67px">Termin *</div>
<div class="abs gh" style="left:726px;width:48px">Von</div>
<div class="abs gh" style="left:775px;width:48px">Bis</div>
<div class="abs gh" style="left:824px;width:56px">Priorität</div>
<div class="abs gr2" style="top:17px"><span class="c m" style="left:19px;width:44px">1274</span><span class="c l" style="left:64px;width:101px">Aufgabe</span><span class="c l" style="left:242px;width:415px">Heizung wird nicht warm</span><span class="c m" style="left:658px;width:67px">27.05.2019</span><span class="c m" style="left:726px;width:48px">09:45:00</span><span class="c m" style="left:775px;width:48px">11:15:00</span><span class="c m" style="left:824px;width:56px">Dringend</span></div>
<div class="abs gr2" style="top:35px"><span class="c m" style="left:19px;width:44px">233</span><span class="c l" style="left:64px;width:101px">Störungsmeldung</span><span class="c l" style="left:242px;width:415px">Fehlercode 502 angezeigt</span><span class="c m" style="left:658px;width:67px">25.04.2019</span><span class="c m" style="left:824px;width:56px">&lt;Keine&gt;</span></div>
<div class="abs gr2" style="top:53px"><span class="c m" style="left:19px;width:44px">229</span><span class="c l" style="left:64px;width:101px">Kundentermin ext...</span><span class="c l" style="left:242px;width:415px">Baustellenbesichtigung</span><span class="c m" style="left:658px;width:67px">26.04.2019</span><span class="c m" style="left:726px;width:48px">09:00:00</span><span class="c m" style="left:775px;width:48px">11:00:00</span><span class="c m" style="left:824px;width:56px">Dringend</span></div>
<i class="hl" style="top:16px;background:#a0a0a0"></i>
<i class="hl" style="top:34px;background:#a0a0a0"></i>
<i class="hl" style="top:52px;background:#a0a0a0"></i>
<i class="hl" style="top:70px;background:#a0a0a0"></i>
<i class="hl" style="top:88px;background:#a0a0a0"></i>
<i class="vl" style="left:18px;height:89px;background:#a0a0a0"></i>
<i class="vl" style="left:63px;height:89px;background:#a0a0a0"></i>
<i class="vl" style="left:165px;height:89px;background:#a0a0a0"></i>
<i class="vl" style="left:241px;height:89px;background:#a0a0a0"></i>
<i class="vl" style="left:657px;height:89px;background:#a0a0a0"></i>
<i class="vl" style="left:725px;height:89px;background:#a0a0a0"></i>
<i class="vl" style="left:774px;height:89px;background:#a0a0a0"></i>
<i class="vl" style="left:823px;height:89px;background:#a0a0a0"></i>
<i class="vl" style="left:880px;height:89px;background:#a0a0a0"></i>
<svg class="abs" style="left:6px;top:20px" width="8" height="82" viewBox="0 0 8 82"><path d="M0 0l6 5.500l-6 5.500z" fill="#000"/><path d="M3.500 56.500v7M0.500 58l6 4M6.500 58l-6 4" stroke="#000" stroke-width="1" fill="none"/></svg>
<div class="abs gb" style="border-color:#606060;box-shadow:inset 1px 1px 0 #808080"></div>
</div>
<!--MAIN3-->

<!-- ===== status bar ===== -->
<div class="abs" style="left:1278px;top:136px;width:1px;height:613px;background:#909090"></div>
<div class="abs st" style="left:2px;width:984px"></div>
<div class="abs st ui" style="left:989px;width:50px">04/2019</div>
<div class="abs st ui" style="left:1042px;width:38px;padding-left:6px">NUM</div>
<div class="abs st ui" style="left:1083px;width:178px;padding-left:3px">admin - Moser-Dokumentation.mdb</div>

<!-- ===== annotation + dialog ===== -->
<svg class="abs" style="left:940px;top:165px" width="330" height="190" viewBox="940 165 330 190"><path d="M1187 201.500L950 347.700" stroke="#e81c2a" stroke-width="2.800" fill="none"/><rect x="1186.500" y="172.500" width="75" height="30" fill="none" stroke="#e81c2a" stroke-width="3"/></svg>
<div id="dlg" class="abs">
<div id="dlgfoot" class="abs"></div>
<div id="dlgt" class="abs">MOS'aik Finanzverwaltung</div>
<svg class="abs" style="left:366px;top:6px" width="12" height="12" viewBox="0 0 12 12"><path d="M1 1l10 10M11 1l-10 10" stroke="#000" stroke-width="1.100" fill="none"/></svg>
<svg class="abs" style="left:20px;top:47px" width="34" height="34" viewBox="0 0 34 34">
<defs><radialGradient id="ib" cx="0.5" cy="0.25" r="0.8"><stop offset="0" stop-color="#5a86e0"/><stop offset="0.55" stop-color="#1c48b4"/><stop offset="1" stop-color="#0c2c8c"/></radialGradient>
<linearGradient id="ig" x1="0" y1="0" x2="0" y2="1"><stop offset="0" stop-color="#fff" stop-opacity=".55"/><stop offset="1" stop-color="#fff" stop-opacity=".05"/></linearGradient></defs>
<circle cx="17" cy="17" r="15.500" fill="#f0f0f0" stroke="#787878" stroke-width="1"/><circle cx="17" cy="17" r="14" fill="url(#ib)" stroke="#1a3a90" stroke-width="0.800"/>
<path d="M4 15a13 13 0 0 1 26 0q-13 5-26 0z" fill="url(#ig)"/>
<circle cx="17" cy="9.300" r="2.300" fill="#fff"/><rect x="15" y="13.500" width="4" height="13" rx="1" fill="#f4f4f4"/></svg>
<div id="dlgm" class="abs">Nicht alle ausgewählten Offenen Posten konnten restlos<br>verrechnet werden.</div>
<div id="ok" class="abs">OK</div>
</div>

</body>
</html>
